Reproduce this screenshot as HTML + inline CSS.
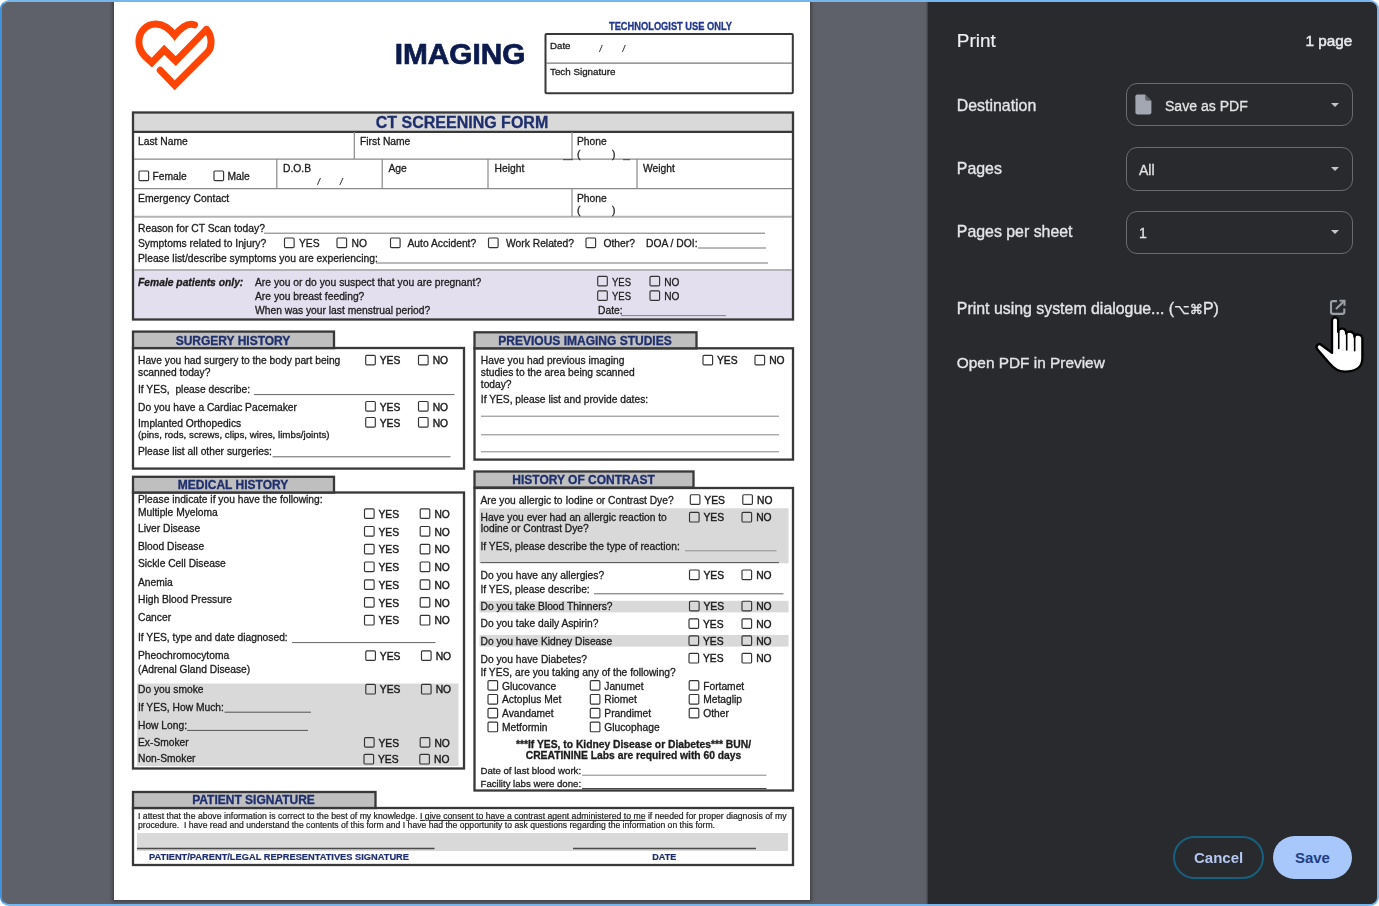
<!DOCTYPE html>
<html lang="en">
<head>
<meta charset="utf-8">
<title>Print - CT Screening Form</title>
<style>
  html,body{margin:0;padding:0;background:#fff;}
  body{width:1379px;height:906px;overflow:hidden;position:relative;font-family:"Liberation Sans","DejaVu Sans",sans-serif;}
  .frame{position:absolute;left:0;top:0;width:1375px;height:902px;border:2px solid #74b6ed;border-left-color:#3f92db;border-radius:9px;overflow:hidden;background:#5f616a;}
  .inner{position:absolute;left:-2px;top:-2px;width:1379px;height:906px;}
  .edge{position:absolute;left:2px;top:2px;width:925px;height:902px;box-shadow:inset 1px 1px 0 #616163;}
  .paper{position:absolute;left:114.1px;top:-10px;width:696px;height:910px;background:#fff;box-shadow:0 0 3px 1.6px #434448;}
  .sidebar{position:absolute;left:927.5px;top:0;width:452px;height:906px;background:#292a2d;box-shadow:-1px 0 1.5px #3a3b3f;color:#e8eaed;}
  svg.form{filter:blur(0.6px);position:absolute;left:0;top:0;width:1379px;height:906px;font-family:"Liberation Sans","DejaVu Sans",sans-serif;}
  .sbc{position:absolute;left:0;top:0;width:452px;height:906px;filter:blur(0.45px);}
  .sidebar .t{position:absolute;white-space:nowrap;}
  .sidebar .lab{font-size:15.9px;line-height:22px;color:#e3e5e8;-webkit-text-stroke:0.35px #e3e5e8;}
  .sidebar .title{color:#eceef0;-webkit-text-stroke:0.2px #eceef0;}
  .sel{position:absolute;left:198.5px;width:226.6px;height:43.2px;border:1.7px solid #6a6b6f;border-radius:11px;box-sizing:border-box;}
  .sel .v{position:absolute;top:1.3px;line-height:41.4px;font-size:14.05px;color:#e3e3e3;-webkit-text-stroke:0.3px #e3e3e3;}
  .sel .arr{position:absolute;right:13px;top:18.4px;width:0;height:0;border-left:4.2px solid transparent;border-right:4.2px solid transparent;border-top:4.6px solid #c4c7c5;}
  .btn{position:absolute;top:835.7px;height:43.8px;box-sizing:border-box;border-radius:22px;font-size:15px;font-weight:bold;text-align:center;line-height:40px;}
</style>
</head>
<body>
<div class="frame"><div class="inner">
  <div class="edge"></div>
  <div class="paper"></div>
  <svg class="form" viewBox="0 0 1379 906">
<g fill="none" stroke="#ff4403" stroke-width="7" stroke-linecap="round" stroke-linejoin="miter"><path d="M 194.5 24.9 C 188.6 22.4, 181.6 26.9, 174.7 35.3 C 169.7 28.9, 163.7 23.9, 155.8 23.9 C 146.3 23.9, 138.9 31.8, 138.9 41.8 C 138.9 47.7, 141.4 52.7, 144.9 56.2 L 151.8 62.6 L 164.2 49.7 L 175.7 61.1 L 206.3 29.6"/><path d="M 206.5 29.4 C 209.6 33, 211.3 38, 211 43 C 210.8 46.5, 209.8 49.8, 207.9 52 L 174.7 85.3 L 160.3 70.3"/></g>
<text x="394.7" y="63.9" font-size="28.8" fill="#0c1b4d" font-weight="bold" textLength="130.8" lengthAdjust="spacingAndGlyphs" stroke="#0c1b4d" stroke-width="0.7">IMAGING</text>
<text x="670.5" y="30.4" font-size="10.6" fill="#20368a" stroke="#20368a" stroke-width="0.3" font-weight="bold" text-anchor="middle" textLength="123" lengthAdjust="spacingAndGlyphs">TECHNOLOGIST USE ONLY</text>
<rect x="545.5" y="33.9" width="247.3" height="59.4" fill="#fff" stroke="#383838" stroke-width="2" rx="1"/>
<line x1="546" y1="63.2" x2="792" y2="63.2" stroke="#7a7a7a" stroke-width="1.3"/>
<text x="550" y="48.6" font-size="9.7" fill="#1c1c1c" stroke="#1c1c1c" stroke-width="0.3">Date</text>
<text x="599.5" y="52" font-size="8.5" fill="#1c1c1c" stroke="#1c1c1c" stroke-width="0.2" font-style="italic">/</text>
<text x="622.5" y="52" font-size="8.5" fill="#1c1c1c" stroke="#1c1c1c" stroke-width="0.2" font-style="italic">/</text>
<text x="550" y="75.2" font-size="9.8" fill="#1c1c1c" stroke="#1c1c1c" stroke-width="0.3">Tech Signature</text>
<rect x="133" y="112.5" width="660" height="19" fill="#d9d9d9"/>
<text x="462" y="128.3" font-size="16" fill="#1f2f6e" stroke="#1f2f6e" stroke-width="0.3" font-weight="bold" text-anchor="middle">CT SCREENING FORM</text>
<rect x="133" y="270" width="660" height="49" fill="#e4dfee"/>
<rect x="133" y="112.5" width="660" height="207" fill="none" stroke="#383838" stroke-width="2.3"/>
<line x1="132" y1="131.8" x2="794" y2="131.8" stroke="#383838" stroke-width="2.3"/>
<line x1="134" y1="159.2" x2="792" y2="159.2" stroke="#8a8a8a" stroke-width="1.2"/>
<line x1="134" y1="188.6" x2="792" y2="188.6" stroke="#8a8a8a" stroke-width="1.2"/>
<line x1="134" y1="216.8" x2="792" y2="216.8" stroke="#b4b4b4" stroke-width="2"/>
<line x1="134" y1="270" x2="792" y2="270" stroke="#b4b3ba" stroke-width="1.8"/>
<line x1="354.3" y1="132" x2="354.3" y2="159" stroke="#8a8a8a" stroke-width="1.2"/>
<line x1="572" y1="132" x2="572" y2="159" stroke="#8a8a8a" stroke-width="1.2"/>
<line x1="276.8" y1="159" x2="276.8" y2="188.6" stroke="#8a8a8a" stroke-width="1.2"/>
<line x1="382.2" y1="159" x2="382.2" y2="188.6" stroke="#8a8a8a" stroke-width="1.2"/>
<line x1="488" y1="159" x2="488" y2="188.6" stroke="#8a8a8a" stroke-width="1.2"/>
<line x1="637" y1="159" x2="637" y2="188.6" stroke="#8a8a8a" stroke-width="1.2"/>
<line x1="572" y1="188.6" x2="572" y2="216.6" stroke="#8a8a8a" stroke-width="1.2"/>
<text x="138" y="145.3" font-size="10.3" fill="#1c1c1c" stroke="#1c1c1c" stroke-width="0.3">Last Name</text>
<text x="360" y="145.3" font-size="10.3" fill="#1c1c1c" stroke="#1c1c1c" stroke-width="0.3">First Name</text>
<text x="577" y="145.3" font-size="10.3" fill="#1c1c1c" stroke="#1c1c1c" stroke-width="0.3">Phone</text>
<text x="577" y="157.6" font-size="10.3" fill="#1c1c1c" stroke="#1c1c1c" stroke-width="0.3">(</text>
<text x="612" y="157.6" font-size="10.3" fill="#1c1c1c" stroke="#1c1c1c" stroke-width="0.3">)</text>
<line x1="563" y1="159.6" x2="573" y2="159.6" stroke="#555" stroke-width="1.2"/>
<line x1="623" y1="159.6" x2="630" y2="159.6" stroke="#555" stroke-width="1.2"/>
<rect x="139" y="171" width="9.6" height="9.6" rx="1.1" fill="none" stroke="#333" stroke-width="1.15"/>
<text x="152.5" y="180" font-size="10.3" fill="#1c1c1c" stroke="#1c1c1c" stroke-width="0.3">Female</text>
<rect x="214" y="171" width="9.6" height="9.6" rx="1.1" fill="none" stroke="#333" stroke-width="1.15"/>
<text x="227.5" y="180" font-size="10.3" fill="#1c1c1c" stroke="#1c1c1c" stroke-width="0.3">Male</text>
<text x="283" y="172.3" font-size="10.3" fill="#1c1c1c" stroke="#1c1c1c" stroke-width="0.3">D.O.B</text>
<text x="317.5" y="184.5" font-size="9" fill="#1c1c1c" stroke="#1c1c1c" stroke-width="0.2" font-style="italic">/</text>
<text x="340" y="184.5" font-size="9" fill="#1c1c1c" stroke="#1c1c1c" stroke-width="0.2" font-style="italic">/</text>
<text x="388.5" y="172.3" font-size="10.3" fill="#1c1c1c" stroke="#1c1c1c" stroke-width="0.3">Age</text>
<text x="494.5" y="172.3" font-size="10.3" fill="#1c1c1c" stroke="#1c1c1c" stroke-width="0.3">Height</text>
<text x="643" y="172.3" font-size="10.3" fill="#1c1c1c" stroke="#1c1c1c" stroke-width="0.3">Weight</text>
<text x="138" y="201.8" font-size="10.4" fill="#1c1c1c" stroke="#1c1c1c" stroke-width="0.3">Emergency Contact</text>
<text x="577" y="201.8" font-size="10.3" fill="#1c1c1c" stroke="#1c1c1c" stroke-width="0.3">Phone</text>
<text x="577" y="213.6" font-size="10.3" fill="#1c1c1c" stroke="#1c1c1c" stroke-width="0.3">(</text>
<text x="612" y="213.6" font-size="10.3" fill="#1c1c1c" stroke="#1c1c1c" stroke-width="0.3">)</text>
<text x="138" y="231.8" font-size="10.3" fill="#1c1c1c" stroke="#1c1c1c" stroke-width="0.3">Reason for CT Scan today?</text>
<line x1="264" y1="233.2" x2="765" y2="233.2" stroke="#666" stroke-width="0.9"/>
<text x="138" y="246.5" font-size="10.3" fill="#1c1c1c" stroke="#1c1c1c" stroke-width="0.3">Symptoms related to Injury?</text>
<rect x="284.5" y="238" width="9.6" height="9.6" rx="1.1" fill="none" stroke="#333" stroke-width="1.15"/>
<text x="299" y="246.5" font-size="10.3" fill="#1c1c1c" stroke="#1c1c1c" stroke-width="0.3">YES</text>
<rect x="337" y="238" width="9.6" height="9.6" rx="1.1" fill="none" stroke="#333" stroke-width="1.15"/>
<text x="351.5" y="246.5" font-size="10.3" fill="#1c1c1c" stroke="#1c1c1c" stroke-width="0.3">NO</text>
<rect x="390.5" y="238" width="9.6" height="9.6" rx="1.1" fill="none" stroke="#333" stroke-width="1.15"/>
<text x="407.5" y="246.5" font-size="10.3" fill="#1c1c1c" stroke="#1c1c1c" stroke-width="0.3">Auto Accident?</text>
<rect x="488.5" y="238" width="9.6" height="9.6" rx="1.1" fill="none" stroke="#333" stroke-width="1.15"/>
<text x="506" y="246.5" font-size="10.3" fill="#1c1c1c" stroke="#1c1c1c" stroke-width="0.3">Work Related?</text>
<rect x="586" y="238" width="9.6" height="9.6" rx="1.1" fill="none" stroke="#333" stroke-width="1.15"/>
<text x="603.5" y="246.5" font-size="10.3" fill="#1c1c1c" stroke="#1c1c1c" stroke-width="0.3">Other?</text>
<text x="646" y="246.5" font-size="10.3" fill="#1c1c1c" stroke="#1c1c1c" stroke-width="0.3">DOA / DOI:</text>
<line x1="698" y1="248" x2="766" y2="248" stroke="#666" stroke-width="0.9"/>
<text x="138" y="261.5" font-size="10.3" fill="#1c1c1c" stroke="#1c1c1c" stroke-width="0.3">Please list/describe symptoms you are experiencing:</text>
<line x1="376" y1="263" x2="768" y2="263" stroke="#666" stroke-width="0.9"/>
<text x="138" y="285.6" font-size="10.3" fill="#1c1c1c" stroke="#1c1c1c" stroke-width="0.3" font-weight="bold" font-style="italic">Female patients only:</text>
<text x="255" y="285.6" font-size="10.3" fill="#1c1c1c" stroke="#1c1c1c" stroke-width="0.3">Are you or do you suspect that you are pregnant?</text>
<text x="255" y="299.9" font-size="10.3" fill="#1c1c1c" stroke="#1c1c1c" stroke-width="0.3">Are you breast feeding?</text>
<text x="255" y="314.2" font-size="10.3" fill="#1c1c1c" stroke="#1c1c1c" stroke-width="0.3">When was your last menstrual period?</text>
<rect x="597.7" y="276.3" width="9.6" height="9.6" rx="1.1" fill="none" stroke="#333" stroke-width="1.15"/>
<text x="612" y="285.6" font-size="11.2" fill="#1c1c1c" stroke="#1c1c1c" stroke-width="0.3" textLength="19" lengthAdjust="spacingAndGlyphs">YES</text>
<rect x="650" y="276.3" width="9.6" height="9.6" rx="1.1" fill="none" stroke="#333" stroke-width="1.15"/>
<text x="664.3" y="285.6" font-size="11.2" fill="#1c1c1c" stroke="#1c1c1c" stroke-width="0.3" textLength="15.2" lengthAdjust="spacingAndGlyphs">NO</text>
<rect x="597.7" y="290.8" width="9.6" height="9.6" rx="1.1" fill="none" stroke="#333" stroke-width="1.15"/>
<text x="612" y="299.9" font-size="11.2" fill="#1c1c1c" stroke="#1c1c1c" stroke-width="0.3" textLength="19" lengthAdjust="spacingAndGlyphs">YES</text>
<rect x="650" y="290.8" width="9.6" height="9.6" rx="1.1" fill="none" stroke="#333" stroke-width="1.15"/>
<text x="664.3" y="299.9" font-size="11.2" fill="#1c1c1c" stroke="#1c1c1c" stroke-width="0.3" textLength="15.2" lengthAdjust="spacingAndGlyphs">NO</text>
<text x="598" y="314.2" font-size="10.3" fill="#1c1c1c" stroke="#1c1c1c" stroke-width="0.3">Date:</text>
<line x1="621" y1="315.6" x2="726" y2="315.6" stroke="#777" stroke-width="0.9"/>
<rect x="133" y="348" width="331" height="120.6" fill="#fff" stroke="#383838" stroke-width="2.3"/>
<rect x="133" y="331.6" width="201" height="16.5" fill="#bfbfbf" stroke="#383838" stroke-width="2.3"/>
<text x="233" y="344.5" font-size="12" fill="#1f2f6e" stroke="#1f2f6e" stroke-width="0.3" font-weight="bold" text-anchor="middle">SURGERY HISTORY</text>
<text x="138" y="364.3" font-size="10.25" fill="#1c1c1c" stroke="#1c1c1c" stroke-width="0.3">Have you had surgery to the body part being</text>
<text x="138" y="376.2" font-size="10.25" fill="#1c1c1c" stroke="#1c1c1c" stroke-width="0.3">scanned today?</text>
<rect x="365.7" y="355.3" width="9.6" height="9.6" rx="1.1" fill="none" stroke="#333" stroke-width="1.15"/>
<text x="379.7" y="364.3" font-size="11.2" fill="#1c1c1c" textLength="20.6" lengthAdjust="spacingAndGlyphs" stroke="#1c1c1c" stroke-width="0.45">YES</text>
<rect x="418.5" y="355.3" width="9.6" height="9.6" rx="1.1" fill="none" stroke="#333" stroke-width="1.15"/>
<text x="432.7" y="364.3" font-size="11.2" fill="#1c1c1c" textLength="15.4" lengthAdjust="spacingAndGlyphs" stroke="#1c1c1c" stroke-width="0.45">NO</text>
<text x="138" y="393.2" font-size="10.25" fill="#1c1c1c" stroke="#1c1c1c" stroke-width="0.3">If YES,  please describe:</text>
<line x1="254" y1="394.6" x2="454.5" y2="394.6" stroke="#555" stroke-width="0.9"/>
<text x="138" y="410.5" font-size="10.25" fill="#1c1c1c" stroke="#1c1c1c" stroke-width="0.3">Do you have a Cardiac Pacemaker</text>
<rect x="365.7" y="401.5" width="9.6" height="9.6" rx="1.1" fill="none" stroke="#333" stroke-width="1.15"/>
<text x="379.7" y="410.5" font-size="11.2" fill="#1c1c1c" textLength="20.6" lengthAdjust="spacingAndGlyphs" stroke="#1c1c1c" stroke-width="0.45">YES</text>
<rect x="418.5" y="401.5" width="9.6" height="9.6" rx="1.1" fill="none" stroke="#333" stroke-width="1.15"/>
<text x="432.7" y="410.5" font-size="11.2" fill="#1c1c1c" textLength="15.4" lengthAdjust="spacingAndGlyphs" stroke="#1c1c1c" stroke-width="0.45">NO</text>
<text x="138" y="426.5" font-size="10.25" fill="#1c1c1c" stroke="#1c1c1c" stroke-width="0.3">Implanted Orthopedics</text>
<rect x="365.7" y="417.5" width="9.6" height="9.6" rx="1.1" fill="none" stroke="#333" stroke-width="1.15"/>
<text x="379.7" y="426.5" font-size="11.2" fill="#1c1c1c" textLength="20.6" lengthAdjust="spacingAndGlyphs" stroke="#1c1c1c" stroke-width="0.45">YES</text>
<rect x="418.5" y="417.5" width="9.6" height="9.6" rx="1.1" fill="none" stroke="#333" stroke-width="1.15"/>
<text x="432.7" y="426.5" font-size="11.2" fill="#1c1c1c" textLength="15.4" lengthAdjust="spacingAndGlyphs" stroke="#1c1c1c" stroke-width="0.45">NO</text>
<text x="138" y="437.8" font-size="9.77" fill="#1c1c1c" stroke="#1c1c1c" stroke-width="0.3">(pins, rods, screws, clips, wires, limbs/joints)</text>
<text x="138" y="455.4" font-size="10.25" fill="#1c1c1c" stroke="#1c1c1c" stroke-width="0.3">Please list all other surgeries:</text>
<line x1="272.5" y1="456.8" x2="450.5" y2="456.8" stroke="#555" stroke-width="0.9"/>
<rect x="474.5" y="348.3" width="318.5" height="111.3" fill="#fff" stroke="#383838" stroke-width="2.3"/>
<rect x="474.5" y="332.3" width="222" height="16" fill="#bfbfbf" stroke="#383838" stroke-width="2.3"/>
<text x="585" y="344.7" font-size="12" fill="#1f2f6e" stroke="#1f2f6e" stroke-width="0.3" font-weight="bold" text-anchor="middle">PREVIOUS IMAGING STUDIES</text>
<text x="480.8" y="364.3" font-size="10.25" fill="#1c1c1c" stroke="#1c1c1c" stroke-width="0.3">Have you had previous imaging</text>
<text x="480.8" y="376.2" font-size="10.25" fill="#1c1c1c" stroke="#1c1c1c" stroke-width="0.3">studies to the area being scanned</text>
<text x="480.8" y="387.8" font-size="10.25" fill="#1c1c1c" stroke="#1c1c1c" stroke-width="0.3">today?</text>
<rect x="703" y="355.3" width="9.6" height="9.6" rx="1.1" fill="none" stroke="#333" stroke-width="1.15"/>
<text x="717.0" y="364.3" font-size="11.2" fill="#1c1c1c" textLength="20.6" lengthAdjust="spacingAndGlyphs" stroke="#1c1c1c" stroke-width="0.45">YES</text>
<rect x="755" y="355.3" width="9.6" height="9.6" rx="1.1" fill="none" stroke="#333" stroke-width="1.15"/>
<text x="769.2" y="364.3" font-size="11.2" fill="#1c1c1c" textLength="15.4" lengthAdjust="spacingAndGlyphs" stroke="#1c1c1c" stroke-width="0.45">NO</text>
<text x="480.8" y="403" font-size="10.25" fill="#1c1c1c" stroke="#1c1c1c" stroke-width="0.3">If YES, please list and provide dates:</text>
<line x1="481" y1="416.2" x2="779" y2="416.2" stroke="#777" stroke-width="0.9"/>
<line x1="481" y1="434.8" x2="779" y2="434.8" stroke="#777" stroke-width="0.9"/>
<line x1="481" y1="451.8" x2="779" y2="451.8" stroke="#777" stroke-width="0.9"/>
<rect x="133" y="492.5" width="331" height="276" fill="#fff" stroke="#383838" stroke-width="2.3"/>
<rect x="133" y="476.8" width="201" height="15.7" fill="#bfbfbf" stroke="#383838" stroke-width="2.3"/>
<text x="233" y="488.9" font-size="12" fill="#1f2f6e" stroke="#1f2f6e" stroke-width="0.3" font-weight="bold" text-anchor="middle">MEDICAL HISTORY</text>
<rect x="137" y="683.5" width="321.5" height="82.5" fill="#d9d9d9"/>
<text x="138" y="503.2" font-size="10.25" fill="#1c1c1c" stroke="#1c1c1c" stroke-width="0.3">Please indicate if you have the following:</text>
<text x="138" y="515.7" font-size="10.25" fill="#1c1c1c" stroke="#1c1c1c" stroke-width="0.3">Multiple Myeloma</text>
<rect x="364.5" y="508.8" width="9.6" height="9.6" rx="1.1" fill="none" stroke="#333" stroke-width="1.15"/>
<text x="378.5" y="517.8" font-size="11.2" fill="#1c1c1c" textLength="20.6" lengthAdjust="spacingAndGlyphs" stroke="#1c1c1c" stroke-width="0.45">YES</text>
<rect x="420.2" y="508.8" width="9.6" height="9.6" rx="1.1" fill="none" stroke="#333" stroke-width="1.15"/>
<text x="434.4" y="517.8" font-size="11.2" fill="#1c1c1c" textLength="15.4" lengthAdjust="spacingAndGlyphs" stroke="#1c1c1c" stroke-width="0.45">NO</text>
<text x="138" y="532.2" font-size="10.25" fill="#1c1c1c" stroke="#1c1c1c" stroke-width="0.3">Liver Disease</text>
<rect x="364.5" y="526.5" width="9.6" height="9.6" rx="1.1" fill="none" stroke="#333" stroke-width="1.15"/>
<text x="378.5" y="535.5" font-size="11.2" fill="#1c1c1c" textLength="20.6" lengthAdjust="spacingAndGlyphs" stroke="#1c1c1c" stroke-width="0.45">YES</text>
<rect x="420.2" y="526.5" width="9.6" height="9.6" rx="1.1" fill="none" stroke="#333" stroke-width="1.15"/>
<text x="434.4" y="535.5" font-size="11.2" fill="#1c1c1c" textLength="15.4" lengthAdjust="spacingAndGlyphs" stroke="#1c1c1c" stroke-width="0.45">NO</text>
<text x="138" y="550.0" font-size="10.25" fill="#1c1c1c" stroke="#1c1c1c" stroke-width="0.3">Blood Disease</text>
<rect x="364.5" y="544.3" width="9.6" height="9.6" rx="1.1" fill="none" stroke="#333" stroke-width="1.15"/>
<text x="378.5" y="553.3" font-size="11.2" fill="#1c1c1c" textLength="20.6" lengthAdjust="spacingAndGlyphs" stroke="#1c1c1c" stroke-width="0.45">YES</text>
<rect x="420.2" y="544.3" width="9.6" height="9.6" rx="1.1" fill="none" stroke="#333" stroke-width="1.15"/>
<text x="434.4" y="553.3" font-size="11.2" fill="#1c1c1c" textLength="15.4" lengthAdjust="spacingAndGlyphs" stroke="#1c1c1c" stroke-width="0.45">NO</text>
<text x="138" y="567.0" font-size="10.25" fill="#1c1c1c" stroke="#1c1c1c" stroke-width="0.3">Sickle Cell Disease</text>
<rect x="364.5" y="562" width="9.6" height="9.6" rx="1.1" fill="none" stroke="#333" stroke-width="1.15"/>
<text x="378.5" y="571.0" font-size="11.2" fill="#1c1c1c" textLength="20.6" lengthAdjust="spacingAndGlyphs" stroke="#1c1c1c" stroke-width="0.45">YES</text>
<rect x="420.2" y="562" width="9.6" height="9.6" rx="1.1" fill="none" stroke="#333" stroke-width="1.15"/>
<text x="434.4" y="571.0" font-size="11.2" fill="#1c1c1c" textLength="15.4" lengthAdjust="spacingAndGlyphs" stroke="#1c1c1c" stroke-width="0.45">NO</text>
<text x="138" y="585.5" font-size="10.25" fill="#1c1c1c" stroke="#1c1c1c" stroke-width="0.3">Anemia</text>
<rect x="364.5" y="579.8" width="9.6" height="9.6" rx="1.1" fill="none" stroke="#333" stroke-width="1.15"/>
<text x="378.5" y="588.8" font-size="11.2" fill="#1c1c1c" textLength="20.6" lengthAdjust="spacingAndGlyphs" stroke="#1c1c1c" stroke-width="0.45">YES</text>
<rect x="420.2" y="579.8" width="9.6" height="9.6" rx="1.1" fill="none" stroke="#333" stroke-width="1.15"/>
<text x="434.4" y="588.8" font-size="11.2" fill="#1c1c1c" textLength="15.4" lengthAdjust="spacingAndGlyphs" stroke="#1c1c1c" stroke-width="0.45">NO</text>
<text x="138" y="602.7" font-size="10.25" fill="#1c1c1c" stroke="#1c1c1c" stroke-width="0.3">High Blood Pressure</text>
<rect x="364.5" y="597.6" width="9.6" height="9.6" rx="1.1" fill="none" stroke="#333" stroke-width="1.15"/>
<text x="378.5" y="606.6" font-size="11.2" fill="#1c1c1c" textLength="20.6" lengthAdjust="spacingAndGlyphs" stroke="#1c1c1c" stroke-width="0.45">YES</text>
<rect x="420.2" y="597.6" width="9.6" height="9.6" rx="1.1" fill="none" stroke="#333" stroke-width="1.15"/>
<text x="434.4" y="606.6" font-size="11.2" fill="#1c1c1c" textLength="15.4" lengthAdjust="spacingAndGlyphs" stroke="#1c1c1c" stroke-width="0.45">NO</text>
<text x="138" y="621.1" font-size="10.25" fill="#1c1c1c" stroke="#1c1c1c" stroke-width="0.3">Cancer</text>
<rect x="364.5" y="615.4" width="9.6" height="9.6" rx="1.1" fill="none" stroke="#333" stroke-width="1.15"/>
<text x="378.5" y="624.4" font-size="11.2" fill="#1c1c1c" textLength="20.6" lengthAdjust="spacingAndGlyphs" stroke="#1c1c1c" stroke-width="0.45">YES</text>
<rect x="420.2" y="615.4" width="9.6" height="9.6" rx="1.1" fill="none" stroke="#333" stroke-width="1.15"/>
<text x="434.4" y="624.4" font-size="11.2" fill="#1c1c1c" textLength="15.4" lengthAdjust="spacingAndGlyphs" stroke="#1c1c1c" stroke-width="0.45">NO</text>
<text x="138" y="641.2" font-size="10.25" fill="#1c1c1c" stroke="#1c1c1c" stroke-width="0.3">If YES, type and date diagnosed:</text>
<line x1="292" y1="642.6" x2="435.5" y2="642.6" stroke="#555" stroke-width="0.9"/>
<text x="138" y="658.9" font-size="10.25" fill="#1c1c1c" stroke="#1c1c1c" stroke-width="0.3">Pheochromocytoma</text>
<rect x="365.8" y="650.8" width="9.6" height="9.6" rx="1.1" fill="none" stroke="#333" stroke-width="1.15"/>
<text x="379.8" y="659.8" font-size="11.2" fill="#1c1c1c" textLength="20.6" lengthAdjust="spacingAndGlyphs" stroke="#1c1c1c" stroke-width="0.45">YES</text>
<rect x="421.5" y="650.8" width="9.6" height="9.6" rx="1.1" fill="none" stroke="#333" stroke-width="1.15"/>
<text x="435.7" y="659.8" font-size="11.2" fill="#1c1c1c" textLength="15.4" lengthAdjust="spacingAndGlyphs" stroke="#1c1c1c" stroke-width="0.45">NO</text>
<text x="138" y="673" font-size="10.25" fill="#1c1c1c" stroke="#1c1c1c" stroke-width="0.3">(Adrenal Gland Disease)</text>
<text x="138" y="692.7" font-size="10.25" fill="#1c1c1c" stroke="#1c1c1c" stroke-width="0.3">Do you smoke</text>
<rect x="365.8" y="684.4" width="9.6" height="9.6" rx="1.1" fill="none" stroke="#333" stroke-width="1.15"/>
<text x="379.8" y="693.4" font-size="11.2" fill="#1c1c1c" textLength="20.6" lengthAdjust="spacingAndGlyphs" stroke="#1c1c1c" stroke-width="0.45">YES</text>
<rect x="421.5" y="684.4" width="9.6" height="9.6" rx="1.1" fill="none" stroke="#333" stroke-width="1.15"/>
<text x="435.7" y="693.4" font-size="11.2" fill="#1c1c1c" textLength="15.4" lengthAdjust="spacingAndGlyphs" stroke="#1c1c1c" stroke-width="0.45">NO</text>
<text x="138" y="710.8" font-size="10.25" fill="#1c1c1c" stroke="#1c1c1c" stroke-width="0.3">If YES, How Much:</text>
<line x1="224.5" y1="712.2" x2="311" y2="712.2" stroke="#444" stroke-width="0.9"/>
<text x="138" y="729" font-size="10.25" fill="#1c1c1c" stroke="#1c1c1c" stroke-width="0.3">How Long:</text>
<line x1="187" y1="730.4" x2="308" y2="730.4" stroke="#444" stroke-width="0.9"/>
<text x="138" y="745.6" font-size="10.25" fill="#1c1c1c" stroke="#1c1c1c" stroke-width="0.3">Ex-Smoker</text>
<rect x="364.5" y="737.6" width="9.6" height="9.6" rx="1.1" fill="none" stroke="#333" stroke-width="1.15"/>
<text x="378.5" y="746.6" font-size="11.2" fill="#1c1c1c" textLength="20.6" lengthAdjust="spacingAndGlyphs" stroke="#1c1c1c" stroke-width="0.45">YES</text>
<rect x="420.2" y="737.6" width="9.6" height="9.6" rx="1.1" fill="none" stroke="#333" stroke-width="1.15"/>
<text x="434.4" y="746.6" font-size="11.2" fill="#1c1c1c" textLength="15.4" lengthAdjust="spacingAndGlyphs" stroke="#1c1c1c" stroke-width="0.45">NO</text>
<text x="138" y="762.2" font-size="10.25" fill="#1c1c1c" stroke="#1c1c1c" stroke-width="0.3">Non-Smoker</text>
<rect x="364" y="754.4" width="9.6" height="9.6" rx="1.1" fill="none" stroke="#333" stroke-width="1.15"/>
<text x="378.0" y="763.4" font-size="11.2" fill="#1c1c1c" textLength="20.6" lengthAdjust="spacingAndGlyphs" stroke="#1c1c1c" stroke-width="0.45">YES</text>
<rect x="419.8" y="754.4" width="9.6" height="9.6" rx="1.1" fill="none" stroke="#333" stroke-width="1.15"/>
<text x="434.0" y="763.4" font-size="11.2" fill="#1c1c1c" textLength="15.4" lengthAdjust="spacingAndGlyphs" stroke="#1c1c1c" stroke-width="0.45">NO</text>
<rect x="474.5" y="488" width="318.5" height="302.5" fill="#fff" stroke="#383838" stroke-width="2.3"/>
<rect x="474.5" y="471.5" width="219" height="16" fill="#bfbfbf" stroke="#383838" stroke-width="2.3"/>
<text x="583.5" y="483.9" font-size="12" fill="#1f2f6e" stroke="#1f2f6e" stroke-width="0.3" font-weight="bold" text-anchor="middle">HISTORY OF CONTRAST</text>
<rect x="479.5" y="508.3" width="309" height="55" fill="#d9d9d9"/>
<rect x="479.5" y="600.8" width="309" height="11.6" fill="#d9d9d9"/>
<rect x="479.5" y="635" width="309" height="11.6" fill="#d9d9d9"/>
<text x="480.5" y="503.6" font-size="10.25" fill="#1c1c1c" stroke="#1c1c1c" stroke-width="0.3">Are you allergic to Iodine or Contrast Dye?</text>
<rect x="690.3" y="494.7" width="9.6" height="9.6" rx="1.1" fill="none" stroke="#333" stroke-width="1.15"/>
<text x="704.3" y="503.7" font-size="11.2" fill="#1c1c1c" textLength="20.6" lengthAdjust="spacingAndGlyphs" stroke="#1c1c1c" stroke-width="0.45">YES</text>
<rect x="742.8" y="494.7" width="9.6" height="9.6" rx="1.1" fill="none" stroke="#333" stroke-width="1.15"/>
<text x="757.0" y="503.7" font-size="11.2" fill="#1c1c1c" textLength="15.4" lengthAdjust="spacingAndGlyphs" stroke="#1c1c1c" stroke-width="0.45">NO</text>
<text x="480.5" y="520.9" font-size="10.25" fill="#1c1c1c" stroke="#1c1c1c" stroke-width="0.3">Have you ever had an allergic reaction to</text>
<rect x="689.5" y="512.4" width="9.6" height="9.6" rx="1.1" fill="none" stroke="#333" stroke-width="1.15"/>
<text x="703.5" y="521.4" font-size="11.2" fill="#1c1c1c" textLength="20.6" lengthAdjust="spacingAndGlyphs" stroke="#1c1c1c" stroke-width="0.45">YES</text>
<rect x="742" y="512.4" width="9.6" height="9.6" rx="1.1" fill="none" stroke="#333" stroke-width="1.15"/>
<text x="756.2" y="521.4" font-size="11.2" fill="#1c1c1c" textLength="15.4" lengthAdjust="spacingAndGlyphs" stroke="#1c1c1c" stroke-width="0.45">NO</text>
<text x="480.5" y="532.4" font-size="10.25" fill="#1c1c1c" stroke="#1c1c1c" stroke-width="0.3">Iodine or Contrast Dye?</text>
<text x="480.5" y="550" font-size="10.25" fill="#1c1c1c" stroke="#1c1c1c" stroke-width="0.3">If YES, please describe the type of reaction:</text>
<line x1="685" y1="550.8" x2="776.5" y2="550.8" stroke="#888" stroke-width="0.9"/>
<line x1="480.5" y1="562.6" x2="779" y2="562.6" stroke="#444" stroke-width="0.9"/>
<text x="480.5" y="578.6" font-size="10.25" fill="#1c1c1c" stroke="#1c1c1c" stroke-width="0.3">Do you have any allergies?</text>
<rect x="689.5" y="570" width="9.6" height="9.6" rx="1.1" fill="none" stroke="#333" stroke-width="1.15"/>
<text x="703.5" y="579.0" font-size="11.2" fill="#1c1c1c" textLength="20.6" lengthAdjust="spacingAndGlyphs" stroke="#1c1c1c" stroke-width="0.45">YES</text>
<rect x="742" y="570" width="9.6" height="9.6" rx="1.1" fill="none" stroke="#333" stroke-width="1.15"/>
<text x="756.2" y="579.0" font-size="11.2" fill="#1c1c1c" textLength="15.4" lengthAdjust="spacingAndGlyphs" stroke="#1c1c1c" stroke-width="0.45">NO</text>
<text x="480.5" y="593" font-size="10.25" fill="#1c1c1c" stroke="#1c1c1c" stroke-width="0.3">If YES, please describe:</text>
<line x1="594" y1="593.8" x2="783.5" y2="593.8" stroke="#555" stroke-width="0.9"/>
<text x="480.5" y="609.5" font-size="10.25" fill="#1c1c1c" stroke="#1c1c1c" stroke-width="0.3">Do you take Blood Thinners?</text>
<rect x="689.5" y="601.2" width="9.6" height="9.6" rx="1.1" fill="none" stroke="#333" stroke-width="1.15"/>
<text x="703.5" y="610.2" font-size="11.2" fill="#1c1c1c" textLength="20.6" lengthAdjust="spacingAndGlyphs" stroke="#1c1c1c" stroke-width="0.45">YES</text>
<rect x="742" y="601.2" width="9.6" height="9.6" rx="1.1" fill="none" stroke="#333" stroke-width="1.15"/>
<text x="756.2" y="610.2" font-size="11.2" fill="#1c1c1c" textLength="15.4" lengthAdjust="spacingAndGlyphs" stroke="#1c1c1c" stroke-width="0.45">NO</text>
<text x="480.5" y="626.8" font-size="10.25" fill="#1c1c1c" stroke="#1c1c1c" stroke-width="0.3">Do you take daily Aspirin?</text>
<rect x="689" y="618.8" width="9.6" height="9.6" rx="1.1" fill="none" stroke="#333" stroke-width="1.15"/>
<text x="703.0" y="627.8" font-size="11.2" fill="#1c1c1c" textLength="20.6" lengthAdjust="spacingAndGlyphs" stroke="#1c1c1c" stroke-width="0.45">YES</text>
<rect x="742" y="618.8" width="9.6" height="9.6" rx="1.1" fill="none" stroke="#333" stroke-width="1.15"/>
<text x="756.2" y="627.8" font-size="11.2" fill="#1c1c1c" textLength="15.4" lengthAdjust="spacingAndGlyphs" stroke="#1c1c1c" stroke-width="0.45">NO</text>
<text x="480.5" y="644.5" font-size="10.25" fill="#1c1c1c" stroke="#1c1c1c" stroke-width="0.3">Do you have Kidney Disease</text>
<rect x="689" y="635.8" width="9.6" height="9.6" rx="1.1" fill="none" stroke="#333" stroke-width="1.15"/>
<text x="703.0" y="644.8" font-size="11.2" fill="#1c1c1c" textLength="20.6" lengthAdjust="spacingAndGlyphs" stroke="#1c1c1c" stroke-width="0.45">YES</text>
<rect x="742" y="635.8" width="9.6" height="9.6" rx="1.1" fill="none" stroke="#333" stroke-width="1.15"/>
<text x="756.2" y="644.8" font-size="11.2" fill="#1c1c1c" textLength="15.4" lengthAdjust="spacingAndGlyphs" stroke="#1c1c1c" stroke-width="0.45">NO</text>
<text x="480.5" y="662.8" font-size="10.25" fill="#1c1c1c" stroke="#1c1c1c" stroke-width="0.3">Do you have Diabetes?</text>
<rect x="689" y="653.4" width="9.6" height="9.6" rx="1.1" fill="none" stroke="#333" stroke-width="1.15"/>
<text x="703.0" y="662.4" font-size="11.2" fill="#1c1c1c" textLength="20.6" lengthAdjust="spacingAndGlyphs" stroke="#1c1c1c" stroke-width="0.45">YES</text>
<rect x="742" y="653.4" width="9.6" height="9.6" rx="1.1" fill="none" stroke="#333" stroke-width="1.15"/>
<text x="756.2" y="662.4" font-size="11.2" fill="#1c1c1c" textLength="15.4" lengthAdjust="spacingAndGlyphs" stroke="#1c1c1c" stroke-width="0.45">NO</text>
<text x="480.5" y="676.1" font-size="10.25" fill="#1c1c1c" stroke="#1c1c1c" stroke-width="0.3">If YES, are you taking any of the following?</text>
<rect x="488" y="680.6" width="9.6" height="9.6" rx="1.1" fill="none" stroke="#333" stroke-width="1.15"/>
<text x="502" y="689.6" font-size="10.25" fill="#1c1c1c" stroke="#1c1c1c" stroke-width="0.3">Glucovance</text>
<rect x="590.3" y="680.6" width="9.6" height="9.6" rx="1.1" fill="none" stroke="#333" stroke-width="1.15"/>
<text x="604.3" y="689.6" font-size="10.25" fill="#1c1c1c" stroke="#1c1c1c" stroke-width="0.3">Janumet</text>
<rect x="689.2" y="680.6" width="9.6" height="9.6" rx="1.1" fill="none" stroke="#333" stroke-width="1.15"/>
<text x="703.2" y="689.6" font-size="10.25" fill="#1c1c1c" stroke="#1c1c1c" stroke-width="0.3">Fortamet</text>
<rect x="488" y="694.45" width="9.6" height="9.6" rx="1.1" fill="none" stroke="#333" stroke-width="1.15"/>
<text x="502" y="703.45" font-size="10.25" fill="#1c1c1c" stroke="#1c1c1c" stroke-width="0.3">Actoplus Met</text>
<rect x="590.3" y="694.45" width="9.6" height="9.6" rx="1.1" fill="none" stroke="#333" stroke-width="1.15"/>
<text x="604.3" y="703.45" font-size="10.25" fill="#1c1c1c" stroke="#1c1c1c" stroke-width="0.3">Riomet</text>
<rect x="689.2" y="694.45" width="9.6" height="9.6" rx="1.1" fill="none" stroke="#333" stroke-width="1.15"/>
<text x="703.2" y="703.45" font-size="10.25" fill="#1c1c1c" stroke="#1c1c1c" stroke-width="0.3">Metaglip</text>
<rect x="488" y="708.3000000000001" width="9.6" height="9.6" rx="1.1" fill="none" stroke="#333" stroke-width="1.15"/>
<text x="502" y="717.3000000000001" font-size="10.25" fill="#1c1c1c" stroke="#1c1c1c" stroke-width="0.3">Avandamet</text>
<rect x="590.3" y="708.3000000000001" width="9.6" height="9.6" rx="1.1" fill="none" stroke="#333" stroke-width="1.15"/>
<text x="604.3" y="717.3000000000001" font-size="10.25" fill="#1c1c1c" stroke="#1c1c1c" stroke-width="0.3">Prandimet</text>
<rect x="689.2" y="708.3000000000001" width="9.6" height="9.6" rx="1.1" fill="none" stroke="#333" stroke-width="1.15"/>
<text x="703.2" y="717.3000000000001" font-size="10.25" fill="#1c1c1c" stroke="#1c1c1c" stroke-width="0.3">Other</text>
<rect x="488" y="722.15" width="9.6" height="9.6" rx="1.1" fill="none" stroke="#333" stroke-width="1.15"/>
<text x="502" y="731.15" font-size="10.25" fill="#1c1c1c" stroke="#1c1c1c" stroke-width="0.3">Metformin</text>
<rect x="590.3" y="722.15" width="9.6" height="9.6" rx="1.1" fill="none" stroke="#333" stroke-width="1.15"/>
<text x="604.3" y="731.15" font-size="10.25" fill="#1c1c1c" stroke="#1c1c1c" stroke-width="0.3">Glucophage</text>
<text x="633.5" y="747.6" font-size="10.3" fill="#1c1c1c" stroke="#1c1c1c" stroke-width="0.3" font-weight="bold" text-anchor="middle">***If YES, to Kidney Disease or Diabetes*** BUN/</text>
<text x="633.5" y="758.9" font-size="10.3" fill="#1c1c1c" stroke="#1c1c1c" stroke-width="0.3" font-weight="bold" text-anchor="middle">CREATININE Labs are required with 60 days</text>
<text x="480.5" y="773.8" font-size="9.65" fill="#1c1c1c" stroke="#1c1c1c" stroke-width="0.3">Date of last blood work:</text>
<line x1="582" y1="775.2" x2="766.5" y2="775.2" stroke="#777" stroke-width="0.9"/>
<text x="480.5" y="787.2" font-size="9.65" fill="#1c1c1c" stroke="#1c1c1c" stroke-width="0.3">Facility labs were done:</text>
<line x1="582" y1="788.6" x2="766.5" y2="788.6" stroke="#333" stroke-width="1"/>
<rect x="133" y="808" width="660" height="57" fill="#fff" stroke="#383838" stroke-width="2.3"/>
<rect x="133" y="792" width="242.5" height="16" fill="#bfbfbf" stroke="#383838" stroke-width="2.3"/>
<text x="253.5" y="804.4" font-size="12" fill="#1f2f6e" stroke="#1f2f6e" stroke-width="0.3" font-weight="bold" text-anchor="middle">PATIENT SIGNATURE</text>
<rect x="137" y="833" width="651" height="18" fill="#d9d9d9"/>
<text x="138" y="819" font-size="8.67" fill="#1c1c1c" stroke="#1c1c1c" stroke-width="0.2" textLength="648.5" lengthAdjust="spacingAndGlyphs">I attest that the above information is correct to the best of my knowledge. <tspan text-decoration="underline">I give consent to have a contrast agent administered to me</tspan> if needed for proper diagnosis of my</text>
<text x="138" y="828.2" font-size="8.67" fill="#1c1c1c" stroke="#1c1c1c" stroke-width="0.2" textLength="577" lengthAdjust="spacingAndGlyphs">procedure.  I have read and understand the contents of this form and I have had the opportunity to ask questions regarding the information on this form.</text>
<line x1="137" y1="848.5" x2="434.5" y2="848.5" stroke="#4a4a4a" stroke-width="1.3"/>
<line x1="573" y1="848.5" x2="756" y2="848.5" stroke="#4a4a4a" stroke-width="1.3"/>
<text x="149" y="859.6" font-size="9.27" fill="#1f2f6e" stroke="#1f2f6e" stroke-width="0.2" font-weight="bold" textLength="260" lengthAdjust="spacingAndGlyphs">PATIENT/PARENT/LEGAL REPRESENTATIVES SIGNATURE</text>
<text x="652.3" y="859.6" font-size="9.1" fill="#1f2f6e" stroke="#1f2f6e" stroke-width="0.2" font-weight="bold" textLength="24" lengthAdjust="spacingAndGlyphs">DATE</text>
  </svg>
  <div class="sidebar"><div class="sbc">
    <div class="t title" style="left:29.3px;top:28.2px;font-size:18.9px;line-height:26px;">Print</div>
    <div class="t med" style="right:27.3px;top:30.4px;font-size:15.3px;line-height:22px;color:#e6e8eb;-webkit-text-stroke:0.55px #e6e8eb;">1 page</div>

    <div class="t lab" style="left:29.3px;top:94.9px;">Destination</div>
    <div class="sel" style="top:83.3px;">
      <svg style="position:absolute;left:8.2px;top:9.8px" width="17" height="21" viewBox="0 0 17 21"><path d="M2.2 0.5 H10.2 L16.4 6.8 V18.6 Q16.4 20.4 14.6 20.4 H2.2 Q0.4 20.4 0.4 18.6 V2.3 Q0.4 0.5 2.2 0.5 Z" fill="#a2a7b1"/><path d="M10.2 0.5 V5 Q10.2 6.8 12 6.8 H16.4 Z" fill="#292a2d" opacity=".55"/></svg>
      <div class="v" style="left:38px;">Save as PDF</div><div class="arr"></div>
    </div>

    <div class="t lab" style="left:29.3px;top:157.6px;">Pages</div>
    <div class="sel" style="top:147.4px;"><div class="v" style="left:12px;">All</div><div class="arr"></div></div>

    <div class="t lab" style="left:29.3px;top:220.9px;">Pages per sheet</div>
    <div class="sel" style="top:210.6px;"><div class="v" style="left:12px;">1</div><div class="arr"></div></div>

    <div class="t lab" style="left:29.3px;top:297.6px;font-size:15.9px;">Print using system dialogue... (<span style="font-family:'DejaVu Sans',sans-serif;font-size:13.4px;letter-spacing:0;">&#x2325;&#x2318;</span>P)</div>
    <div class="t lab" style="left:29.3px;top:351.8px;font-size:15.4px;">Open PDF in Preview</div>

    <svg style="position:absolute;left:372.5px;top:290px" width="79" height="90" viewBox="0 0 795 906">
      <g fill="none" stroke="#9aa0a6" stroke-width="21" stroke-linecap="butt" stroke-linejoin="round">
        <path d="M372 112 H330 Q312 112 312 130 V222 Q312 240 330 240 H428 Q446 240 446 222 V186"/>
        <path d="M362 192 L440 116"/>
        <path d="M398 108 H448 V158" stroke-linejoin="miter"/>
      </g>
      <path d="M322 632 L322 305 A31 31 0 0 1 384 305 L384 420 C392 376 466 376 466 440 C474 408 548 410 548 470 C556 438 628 440 628 496 L628 690 C628 790 540 822 450 822 C380 822 340 790 300 742 L176 600 C148 568 186 528 216 554 Z" fill="#fff" stroke="#000" stroke-width="24" stroke-linejoin="round"/>
      <g stroke="#000" stroke-width="16" stroke-linecap="round"><path d="M390 425 V588"/><path d="M470 450 V604"/><path d="M550 478 V612"/></g>
    </svg>

    <div class="btn" style="left:245.4px;width:91.4px;border:2px solid #16607f;color:#b3c7f1;">Cancel</div>
    <div class="btn" style="left:345.2px;width:79.5px;background:#a8c7fa;color:#1d3f86;line-height:44px;">Save</div>

  </div></div>
</div></div>
</body>
</html>
